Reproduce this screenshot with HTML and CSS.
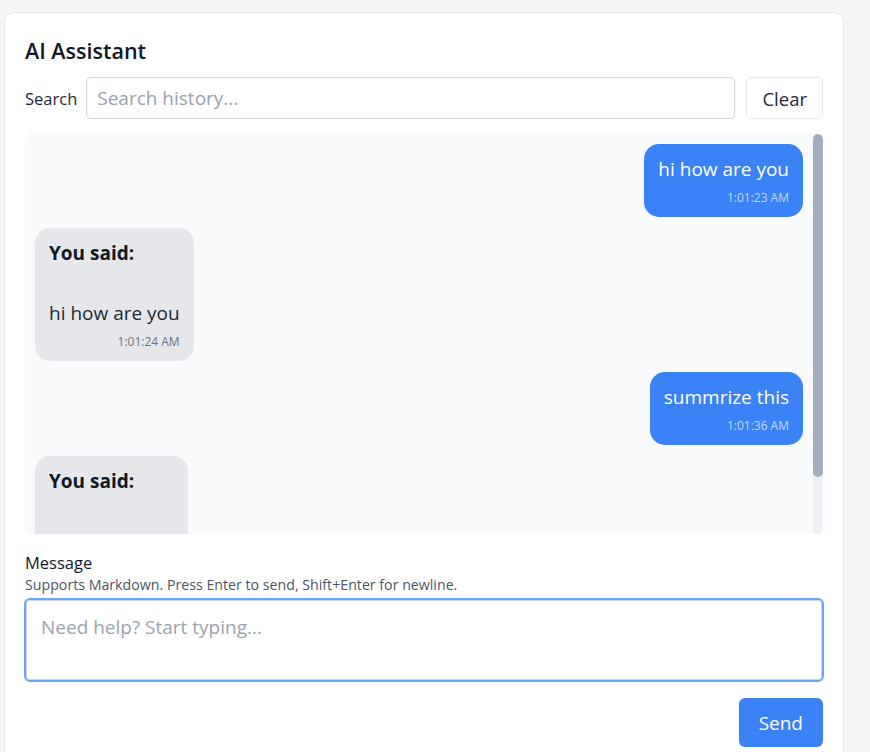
FILE: index.html
```html
<!DOCTYPE html>
<html lang="en">
<head>
<meta charset="utf-8">
<title>AI Assistant</title>
<link rel="stylesheet" href="styles.css">
</head>
<body>
<div class="card">
  <h1 class="title">AI Assistant</h1>
  <div class="search-row">
    <label class="search-label" for="search">Search</label>
    <input id="search" class="search-input" type="text" placeholder="Search history...">
    <button class="btn-clear" type="button">Clear</button>
  </div>
  <div class="chat">
    <div class="chat-list">
      <div class="msg msg-user">
        <div class="msg-text">hi how are you</div>
        <div class="msg-time">1:01:23 AM</div>
      </div>
      <div class="msg msg-bot">
        <p class="msg-head">You said:</p>
        <p class="msg-text">hi how are you</p>
        <div class="msg-time">1:01:24 AM</div>
      </div>
      <div class="msg msg-user">
        <div class="msg-text">summrize this</div>
        <div class="msg-time">1:01:36 AM</div>
      </div>
      <div class="msg msg-bot">
        <p class="msg-head">You said:</p>
        <p class="msg-text">summrize this</p>
      </div>
    </div>
    <div class="scrollbar"><div class="scrollbar-thumb"></div></div>
  </div>
  <div class="composer">
    <label class="composer-label" for="message">Message</label>
    <div class="composer-help">Supports Markdown. Press Enter to send, Shift+Enter for newline.</div>
    <textarea id="message" class="composer-input" placeholder="Need help? Start typing..." autofocus></textarea>
    <div class="composer-actions">
      <button class="btn-send" type="button">Send</button>
    </div>
  </div>
</div>
</body>
</html>
```

FILE: styles.css
```css
* { box-sizing: border-box; }

html, body {
  margin: 0;
  background: #f3f4f6;
  font-family: "Open Sans", "Noto Sans", sans-serif;
  color: #111827;
}

body {
  padding: 12px 0 0 4px;
  overflow: hidden;
}

.card {
  width: 840px;
  background: #ffffff;
  border: 1px solid #e5e7eb;
  border-radius: 10px;
  padding: 20px;
}

.title {
  margin: 0 0 9px 0;
  font-size: 21.5px;
  line-height: 35px;
  font-weight: 600;
  color: #111827;
}

.search-row {
  display: flex;
  align-items: center;
  gap: 9px;
  margin-bottom: 15px;
}

.search-label {
  font-size: 16.5px;
  color: #1f2937;
}

.search-input {
  flex: 1;
  height: 42px;
  border: 1px solid #d1d5db;
  border-radius: 5px;
  padding: 0 10px;
  font-family: inherit;
  font-size: 19px;
  color: #111827;
  outline: none;
}

.search-input::placeholder { color: #9ca3af; }

.btn-clear {
  height: 42px;
  margin-left: 2px;
  padding: 0 15px;
  background: #ffffff;
  border: 1px solid #e5e7eb;
  border-radius: 5px;
  font-family: inherit;
  font-size: 18.5px;
  color: #1f2937;
}

.chat {
  height: 400px;
  display: flex;
  background: #f9fafb;
  border-radius: 5px;
  overflow: hidden;
}

.chat-list {
  flex: 1;
  overflow: hidden;
  padding: 10px;
  display: flex;
  flex-direction: column;
  gap: 11px;
}

.scrollbar {
  width: 10px;
  flex: none;
  background: #edf1f6;
}

.scrollbar-thumb {
  height: 343px;
  background: #a3adbd;
  border-radius: 5px;
}

.msg {
  max-width: 75%;
  padding: 10px 14px;
  border-radius: 15px;
  font-size: 19px;
  line-height: 30px;
}

.msg p { margin: 0; }

.msg-user {
  align-self: flex-end;
  background: #3b82f6;
  color: #ffffff;
}

.msg-bot {
  align-self: flex-start;
  background: #e5e7eb;
  color: #1f2937;
}

.msg .msg-head {
  font-weight: 700;
  color: #111827;
  margin-bottom: 30px;
}

.msg-time {
  margin-top: 5px;
  font-size: 12px;
  line-height: 18px;
  text-align: right;
}

.msg-user .msg-time { color: #c3d9fc; }
.msg-bot .msg-time { color: #6b7280; }

.composer { margin-top: 17px; }

.composer-label {
  display: block;
  font-size: 16.5px;
  line-height: 24px;
  color: #111827;
}

.composer-help {
  font-size: 14.2px;
  line-height: 20px;
  color: #4b5563;
  margin-bottom: 3px;
}

.composer-input {
  display: block;
  width: calc(100% + 2px);
  margin: 0 -1px;
  height: 84px;
  resize: none;
  border: 2px solid #6aa6f6;
  box-shadow: inset 0 0 0 1px #d1d5db;
  border-radius: 6px;
  padding: 12px 15px;
  font-family: inherit;
  font-size: 19px;
  line-height: 30px;
  color: #111827;
  outline: none;
}

.composer-input::placeholder { color: #9ca3af; }

.composer-actions {
  display: flex;
  justify-content: flex-end;
  margin-top: 16px;
}

.btn-send {
  height: 49px;
  padding: 0 20px;
  background: #3b82f6;
  color: #ffffff;
  border: none;
  border-radius: 6px;
  font-family: inherit;
  font-size: 19px;
}
```
